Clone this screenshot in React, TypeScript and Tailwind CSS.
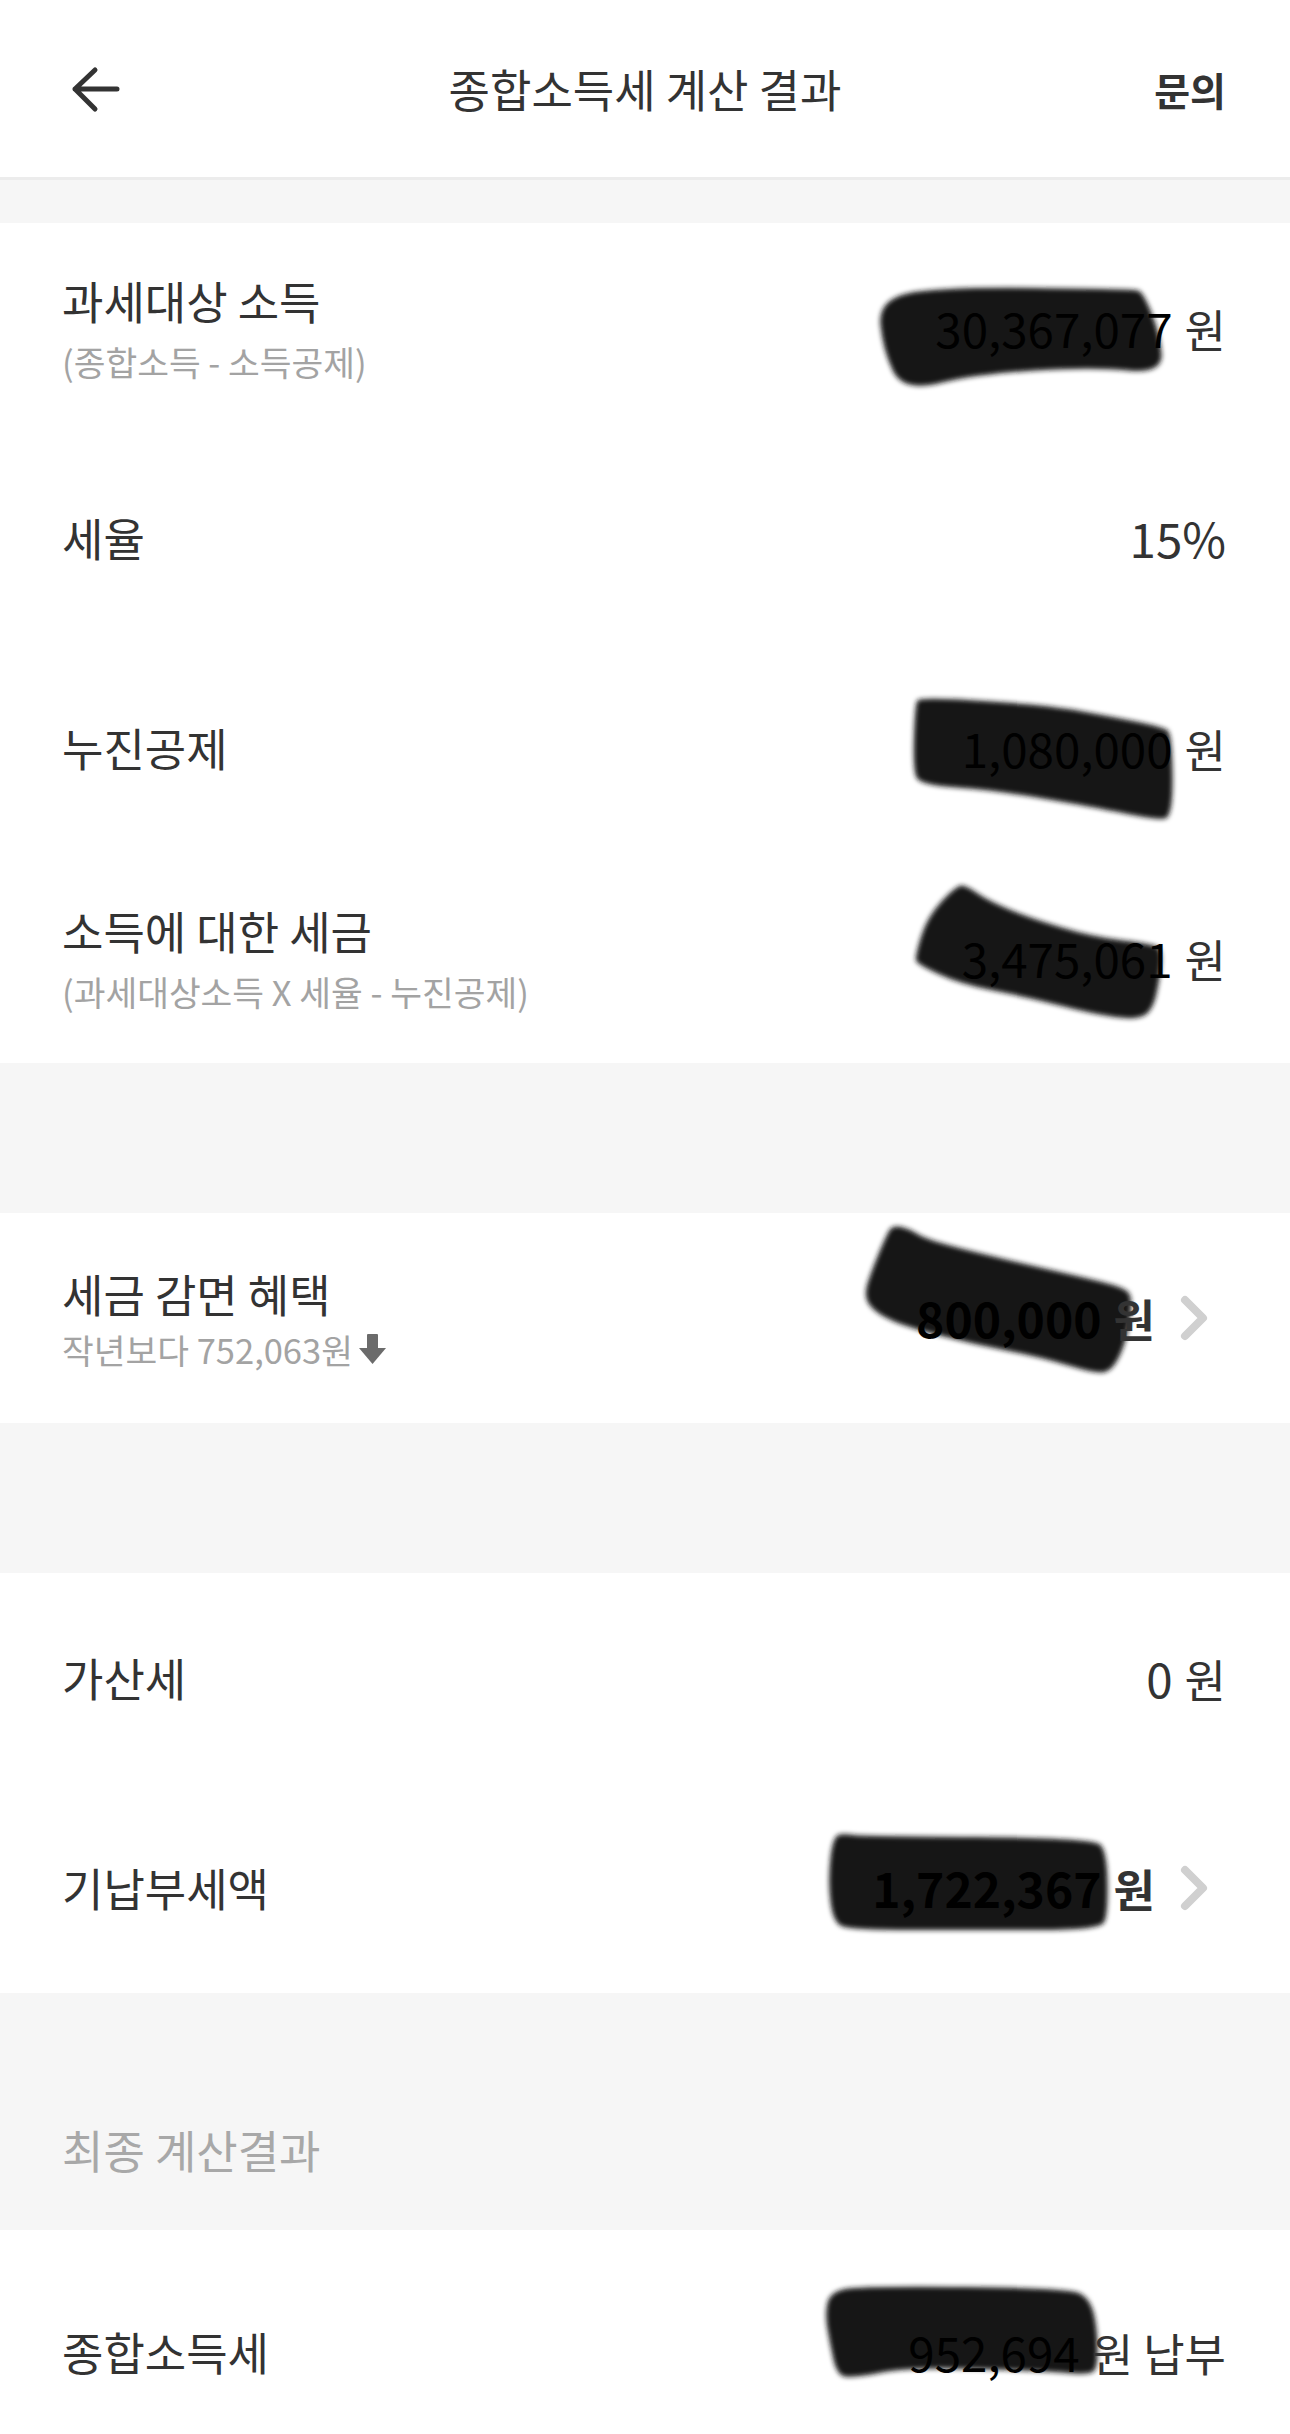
import React from "react";

type Pt = [number, number];

function smoothPath(pts: Pt[]): string {
  const n = pts.length;
  const mid = (a: Pt, b: Pt): Pt => [(a[0] + b[0]) / 2, (a[1] + b[1]) / 2];
  const start = mid(pts[n - 1], pts[0]);
  let d = `M ${start[0]} ${start[1]}`;
  for (let i = 0; i < n; i++) {
    const p = pts[i];
    const m = mid(p, pts[(i + 1) % n]);
    d += ` Q ${p[0]} ${p[1]} ${m[0]} ${m[1]}`;
  }
  return d + " Z";
}

function Blob({ id, pts, h }: { id: string; pts: Pt[]; h: number }) {
  return (
    <svg
      className="absolute left-0 top-0 pointer-events-none"
      width={1290}
      height={h}
      viewBox={`0 0 1290 ${h}`}
    >
      <defs>
        <filter id={id} x="-10%" y="-30%" width="120%" height="160%">
          <feGaussianBlur stdDeviation="2.5" />
        </filter>
      </defs>
      <path d={smoothPath(pts)} fill="#161616" filter={`url(#${id})`} />
    </svg>
  );
}

function Chevron() {
  return (
    <svg width="28" height="46" viewBox="0 0 28 46" className="ml-[25px] mr-[18px] shrink-0">
      <polyline
        points="5,5 23,23 5,41"
        fill="none"
        stroke="#d0d0d0"
        strokeWidth="8"
        strokeLinecap="round"
        strokeLinejoin="round"
      />
    </svg>
  );
}

function DownArrow() {
  return (
    <svg width="28" height="30" viewBox="0 0 28 30" className="ml-[6px] inline-block">
      <rect x="8" y="0" width="11" height="16" fill="#6b6b6b" rx="1" />
      <polygon points="0,14 27,14 13.5,30" fill="#6b6b6b" strokeLinejoin="round" />
    </svg>
  );
}

const FONT = "font-['Noto_Sans_CJK_KR',sans-serif]";

function Label({ text, sub, gap = "mt-[12px]" }: { text: string; sub?: React.ReactNode; gap?: string }) {
  return (
    <div className="flex flex-col">
      <div className="text-[45px] leading-[54px] text-[#333333]">{text}</div>
      {sub && <div className={`text-[34.5px] leading-[42px] text-[#a3a3a3] ${gap} flex items-center`}>{sub}</div>}
    </div>
  );
}

function Value({ num, unit = "원", bold = false, numColor = "text-black" }: { num: string; unit?: string; bold?: boolean; numColor?: string }) {
  return (
    <div className={`flex items-baseline ${bold ? "font-bold" : ""}`}>
      <span className={`${bold ? "text-[48px]" : "text-[47.5px]"} leading-[54px] ${numColor}`}>{num}</span>
      {unit && <span className="text-[45px] leading-[54px] text-[#333333] ml-[12px]">{unit}</span>}
    </div>
  );
}

export default function App() {
  return (
    <div className={`w-[1290px] bg-white ${FONT}`}>
      {/* Header */}
      <div className="h-[180px] flex items-center border-b-[3px] border-[#ececec]">
        <div className="w-[240px] pl-[70px] flex items-center">
          <svg width="52" height="48" viewBox="0 0 52 48">
            <path
              d="M5 24 H47 M25 5 L5 24 L25 44"
              fill="none"
              stroke="#333333"
              strokeWidth="5"
              strokeLinecap="round"
              strokeLinejoin="round"
            />
          </svg>
        </div>
        <div className="flex-1 text-center text-[45px] text-[#333333] leading-[54px]">종합소득세 계산 결과</div>
        <div className="w-[240px] pr-[64px] text-right text-[39px] font-bold text-[#333333] leading-[54px]">문의</div>
      </div>
      <div className="h-[43px] bg-[#f6f6f6]" />

      {/* Section 1 */}
      <div className="bg-white">
        <div className="relative h-[210px]">
          <Blob
            id="b1"
            h={210}
            pts={[[878, 77], [937, 64], [1133, 66], [1143, 69], [1160, 111], [1163, 151], [1093, 144], [977, 151], [903, 169], [883, 127]]}
          />
          <div className="relative h-full flex items-center justify-between pl-[62px] pr-[64px]">
            <Label text="과세대상 소득" sub="(종합소득 - 소득공제)" />
            <Value num="30,367,077" />
          </div>
        </div>
        <div className="relative h-[210px]">
          <div className="relative h-full flex items-center justify-between pl-[62px] pr-[64px]">
            <Label text="세율" />
            <Value num="15%" unit="" numColor="text-[#333333]" />
          </div>
        </div>
        <div className="relative h-[210px]">
          <Blob
            id="b2"
            h={210}
            pts={[[920, 54], [1047, 62], [1113, 74], [1163, 84], [1172, 91], [1173, 174], [1157, 177], [1093, 164], [993, 147], [920, 142], [913, 127], [915, 61]]}
          />
          <div className="relative h-full flex items-center justify-between pl-[62px] pr-[64px]">
            <Label text="누진공제" />
            <Value num="1,080,000" />
          </div>
        </div>
        <div className="relative h-[210px]">
          <Blob
            id="b3"
            h={210}
            pts={[[957, 32], [967, 33], [987, 47], [1027, 64], [1093, 84], [1153, 91], [1162, 97], [1160, 124], [1153, 157], [1137, 167], [1093, 161], [1027, 144], [960, 131], [917, 111], [915, 104], [927, 64]]}
          />
          <div className="relative h-full flex items-center justify-between pl-[62px] pr-[64px]">
            <Label text="소득에 대한 세금" sub="(과세대상소득 X 세율 - 누진공제)" />
            <Value num="3,475,061" />
          </div>
        </div>
      </div>

      <div className="h-[150px] bg-[#f6f6f6]" />

      {/* Section 2 */}
      <div className="relative h-[210px] bg-white">
        <Blob
          id="b4"
          h={210}
          pts={[[893, 12], [910, 16], [927, 27], [1007, 47], [1073, 62], [1123, 74], [1133, 84], [1127, 127], [1113, 157], [1097, 161], [1040, 144], [973, 131], [907, 114], [877, 101], [863, 84], [873, 54], [887, 21]]}
        />
        <div className="relative h-full flex items-center justify-between pl-[62px] pr-[64px]">
          <Label
            text="세금 감면 혜택"
            gap="mt-[7px]"
            sub={
              <>
                <span>작년보다 752,063원</span>
                <DownArrow />
              </>
            }
          />
          <div className="flex items-center">
            <Value num="800,000" bold />
            <Chevron />
          </div>
        </div>
      </div>

      <div className="h-[150px] bg-[#f6f6f6]" />

      {/* Section 3 */}
      <div className="bg-white">
        <div className="relative h-[210px]">
          <div className="relative h-full flex items-center justify-between pl-[62px] pr-[64px]">
            <Label text="가산세" />
            <Value num="0" numColor="text-[#333333]" />
          </div>
        </div>
        <div className="relative h-[210px]">
          <Blob
            id="b5"
            h={210}
            pts={[[833, 52], [847, 51], [860, 53], [1093, 55], [1107, 68], [1108, 132], [1100, 147], [977, 147], [850, 147], [833, 139], [828, 98]]}
          />
          <div className="relative h-full flex items-center justify-between pl-[62px] pr-[64px]">
            <Label text="기납부세액" />
            <div className="flex items-center">
              <Value num="1,722,367" bold />
              <Chevron />
            </div>
          </div>
        </div>
      </div>

      {/* Final header */}
      <div className="h-[237px] bg-[#f6f6f6] flex items-start pt-[130px] pl-[62px]">
        <div className="text-[45px] leading-[54px] text-[#a8a8a8]">최종 계산결과</div>
      </div>

      {/* Final row */}
      <div className="relative h-[201px] bg-white">
        <Blob
          id="b6"
          h={201}
          pts={[[830, 62], [860, 56], [1070, 58], [1090, 69], [1097, 96], [1098, 137], [1090, 145], [1043, 141], [910, 137], [853, 148], [837, 145], [830, 114], [825, 84]]}
        />
        <div className="relative h-full flex items-start justify-between pt-[95px] pl-[62px] pr-[64px]">
          <Label text="종합소득세" />
          <div className="flex items-baseline">
            <span className="text-[47.5px] leading-[54px] text-black">952,694</span>
            <span className="text-[45px] leading-[54px] text-[#333333] ml-[12px]">원 납부</span>
          </div>
        </div>
      </div>
    </div>
  );
}
